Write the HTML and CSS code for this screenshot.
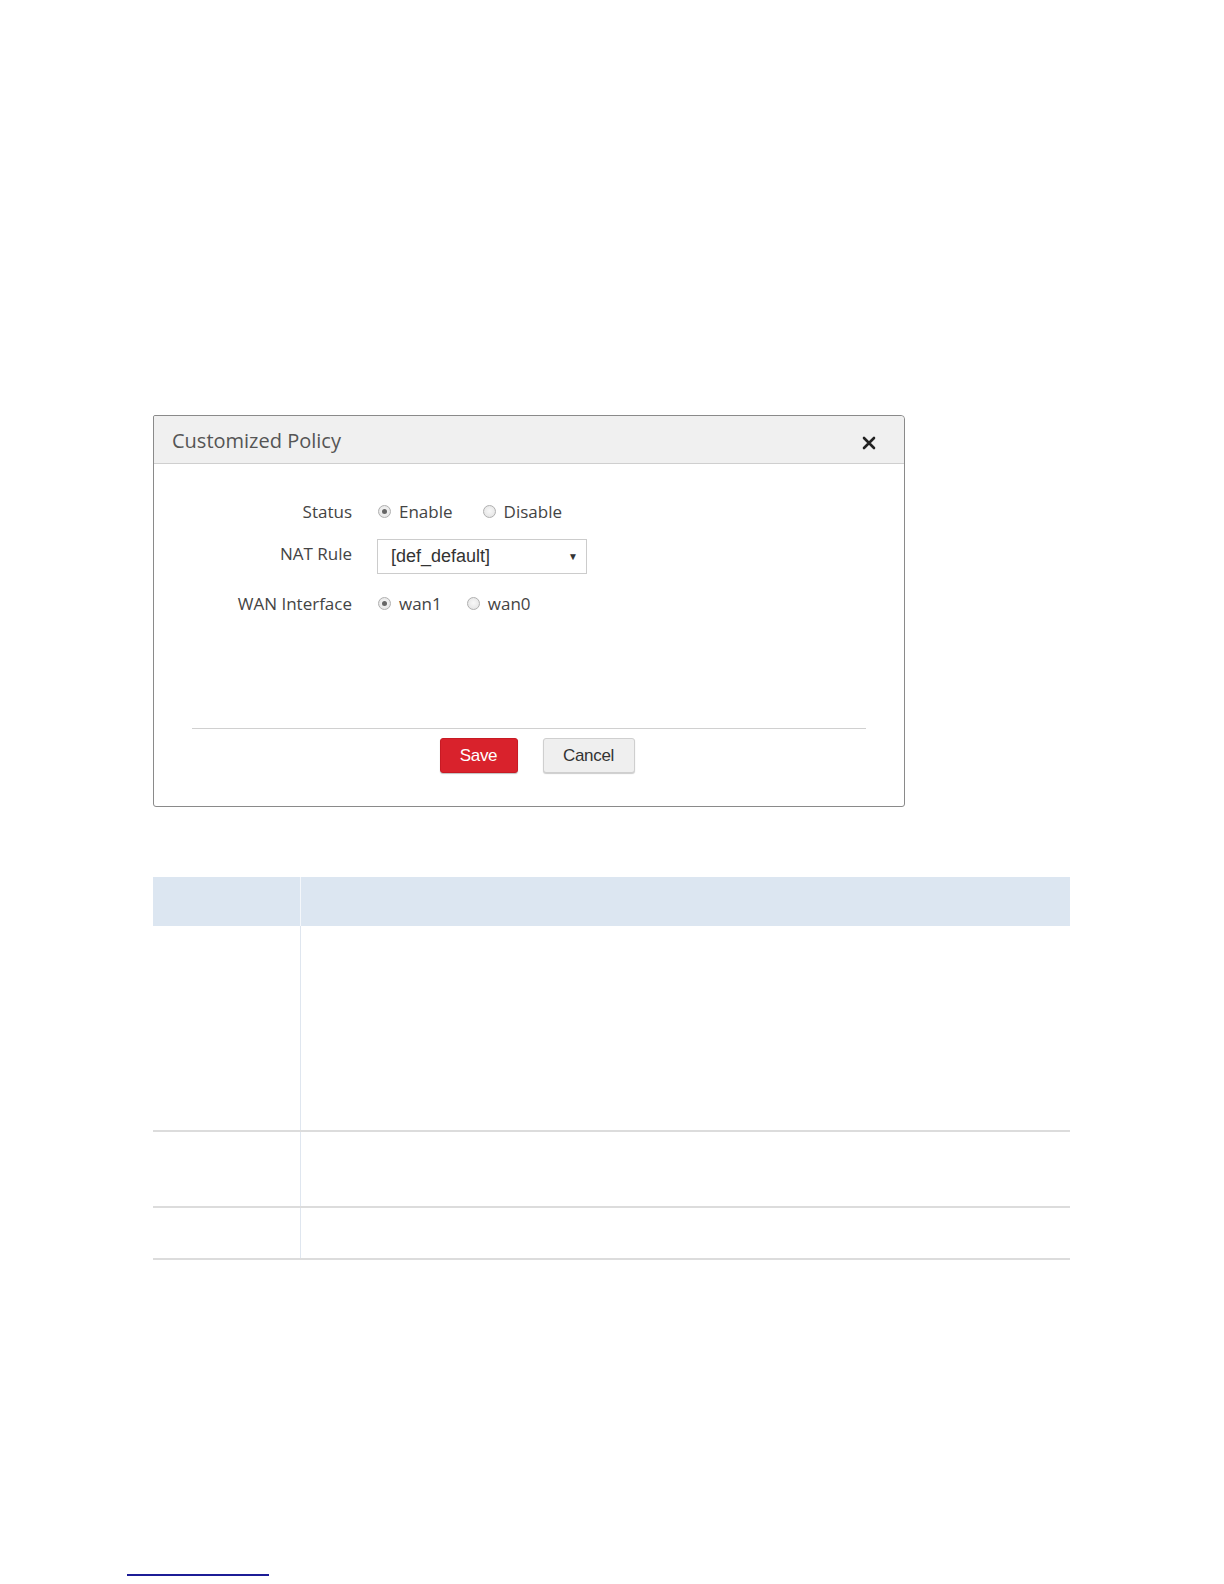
FILE: index.html
```html
<!DOCTYPE html>
<html>
<head>
<meta charset="utf-8">
<link rel="stylesheet" href="styles.css">
</head>
<body>
<div class="page">
  <div class="dialog">
    <div class="dlg-head">
      <span class="dlg-title">Customized Policy</span>
      <svg class="close" width="14" height="14" viewBox="0 0 14 14"><path d="M2 2 L12 12 M12 2 L2 12" stroke="#222" stroke-width="2.6" stroke-linecap="round"/></svg>
    </div>
    <div class="dlg-body">
      <div class="row">
        <div class="label">Status</div>
        <div class="ctrl">
          <span class="opt"><span class="radio on"></span>Enable</span>
          <span class="opt gap-lg"><span class="radio"></span>Disable</span>
        </div>
      </div>
      <div class="row row-select">
        <div class="label">NAT Rule</div>
        <div class="ctrl">
          <div class="select"><span>[def_default]</span><span class="arrow">&#9660;</span></div>
        </div>
      </div>
      <div class="row">
        <div class="label">WAN Interface</div>
        <div class="ctrl">
          <span class="opt"><span class="radio on"></span>wan1</span>
          <span class="opt gap-sm"><span class="radio"></span>wan0</span>
        </div>
      </div>
    </div>
    <div class="dlg-foot">
      <div class="buttons">
        <button class="btn btn-save">Save</button>
        <button class="btn btn-cancel">Cancel</button>
      </div>
    </div>
  </div>

  <div class="table">
    <div class="t-row t-head"><div class="c1"></div><div class="c2"></div></div>
    <div class="t-row r1"><div class="c1"></div><div class="c2"></div></div>
    <div class="t-row r2"><div class="c1"></div><div class="c2"></div></div>
    <div class="t-row r3"><div class="c1"></div><div class="c2"></div></div>
  </div>

  <div class="footnote-line"></div>
</div>
</body>
</html>
```

FILE: styles.css
```css
html, body {
  margin: 0;
  padding: 0;
  background: #ffffff;
}
body {
  font-family: "Liberation Sans", Arial, sans-serif;
  color: #333;
}
.page {
  width: 1224px;
  height: 1584px;
  padding-top: 415px;
  box-sizing: border-box;
  position: relative;
}
.dialog {
  margin-left: 153px;
  width: 752px;
  height: 392px;
  box-sizing: border-box;
  border: 1px solid #8a8a8a;
  border-radius: 2px 4px 3px 3px;
  display: flex;
  flex-direction: column;
  background: #fff;
}
.dlg-head {
  height: 48px;
  flex: none;
  box-sizing: border-box;
  background: #f0f0f0;
  border-bottom: 1px solid #cfcfcf;
  display: flex;
  align-items: center;
  justify-content: space-between;
  padding: 0 28px 0 18px;
  border-radius: 2px 4px 0 0;
}
.dlg-title {
  font-family: "Open Sans", "Liberation Sans", sans-serif;
  font-size: 20px;
  color: #555;
  letter-spacing: 0;
  padding-top: 1px;
}
.close {
  margin-top: 6px;
}
.dlg-body {
  padding-top: 32px;
  height: 264px;
  flex: none;
  box-sizing: border-box;
}
.row {
  display: flex;
  align-items: center;
  height: 30px;
  margin-bottom: 13px;
}
.row-select {
  height: 34px;
  margin-bottom: 15px;
}
.label {
  width: 198px;
  text-align: right;
  font-family: "Open Sans", "Liberation Sans", sans-serif;
  font-size: 17px;
  letter-spacing: 0;
  color: #444;
  padding-right: 25px;
  box-sizing: content-box;
}
.row-select .label {
  margin-top: -6px;
}
.ctrl {
  display: flex;
  align-items: center;
}
.opt {
  display: inline-flex;
  align-items: center;
  font-family: "Open Sans", "Liberation Sans", sans-serif;
  font-size: 17px;
  letter-spacing: 0;
  color: #444;
}
.gap-lg { margin-left: 29px; }
.gap-sm { margin-left: 24px; }
.radio {
  width: 13px;
  height: 13px;
  border-radius: 50%;
  border: 1px solid #b0b0b0;
  background: radial-gradient(circle at 50% 45%, #f8f8f8 0%, #e0e0e0 100%);
  margin-right: 8px;
  position: relative;
  box-sizing: border-box;
  margin-left: 1px;
}
.radio.on::after {
  content: "";
  position: absolute;
  left: 3px;
  top: 3px;
  width: 5px;
  height: 5px;
  border-radius: 50%;
  background: #666;
}
.select {
  width: 210px;
  height: 35px;
  box-sizing: border-box;
  border: 1px solid #cccccc;
  display: flex;
  align-items: center;
  justify-content: space-between;
  padding: 0 8px 0 13px;
  font-size: 18px;
  color: #333;
  background: #fff;
}
.arrow {
  font-size: 10px;
  color: #333;
}
.dlg-foot {
  margin: 0 38px;
  border-top: 1px solid #d0d0d0;
  padding-top: 9px;
}
.buttons {
  display: flex;
  justify-content: center;
  gap: 25px;
  padding-left: 16px;
}
.btn {
  height: 35px;
  box-sizing: border-box;
  font-family: "Liberation Sans", Arial, sans-serif;
  font-size: 17px;
  border-radius: 3px;
  padding: 0;
  letter-spacing: -0.3px;
}
.btn-save {
  width: 78px;
  background: #d9222c;
  border: 1px solid #c81a24;
  color: #fff;
  box-shadow: 0 1px 1px rgba(0,0,0,0.25);
}
.btn-cancel {
  width: 92px;
  background: #efefef;
  border: 1px solid #cfcfcf;
  color: #333;
  box-shadow: 0 1px 1px rgba(0,0,0,0.2);
}

.table {
  margin-left: 153px;
  margin-top: 70px;
  width: 917px;
}
.t-row {
  display: flex;
}
.c1 {
  width: 147px;
  border-right: 1px solid #dfe6ef;
}
.c2 {
  flex: 1;
}
.t-head {
  height: 49px;
  background: #dce6f1;
}
.t-head .c1 {
  border-right: 1px solid #f4f7fb;
}
.r1 {
  height: 204px;
  border-bottom: 2px solid #dcdcdc;
}
.r2 {
  height: 74px;
  border-bottom: 2px solid #dcdcdc;
}
.r3 {
  height: 50px;
  border-bottom: 2px solid #dcdcdc;
}
.footnote-line {
  width: 142px;
  height: 0;
  border-top: 2px solid #1c1c96;
  margin-left: 127px;
  margin-top: 314px;
}
```
